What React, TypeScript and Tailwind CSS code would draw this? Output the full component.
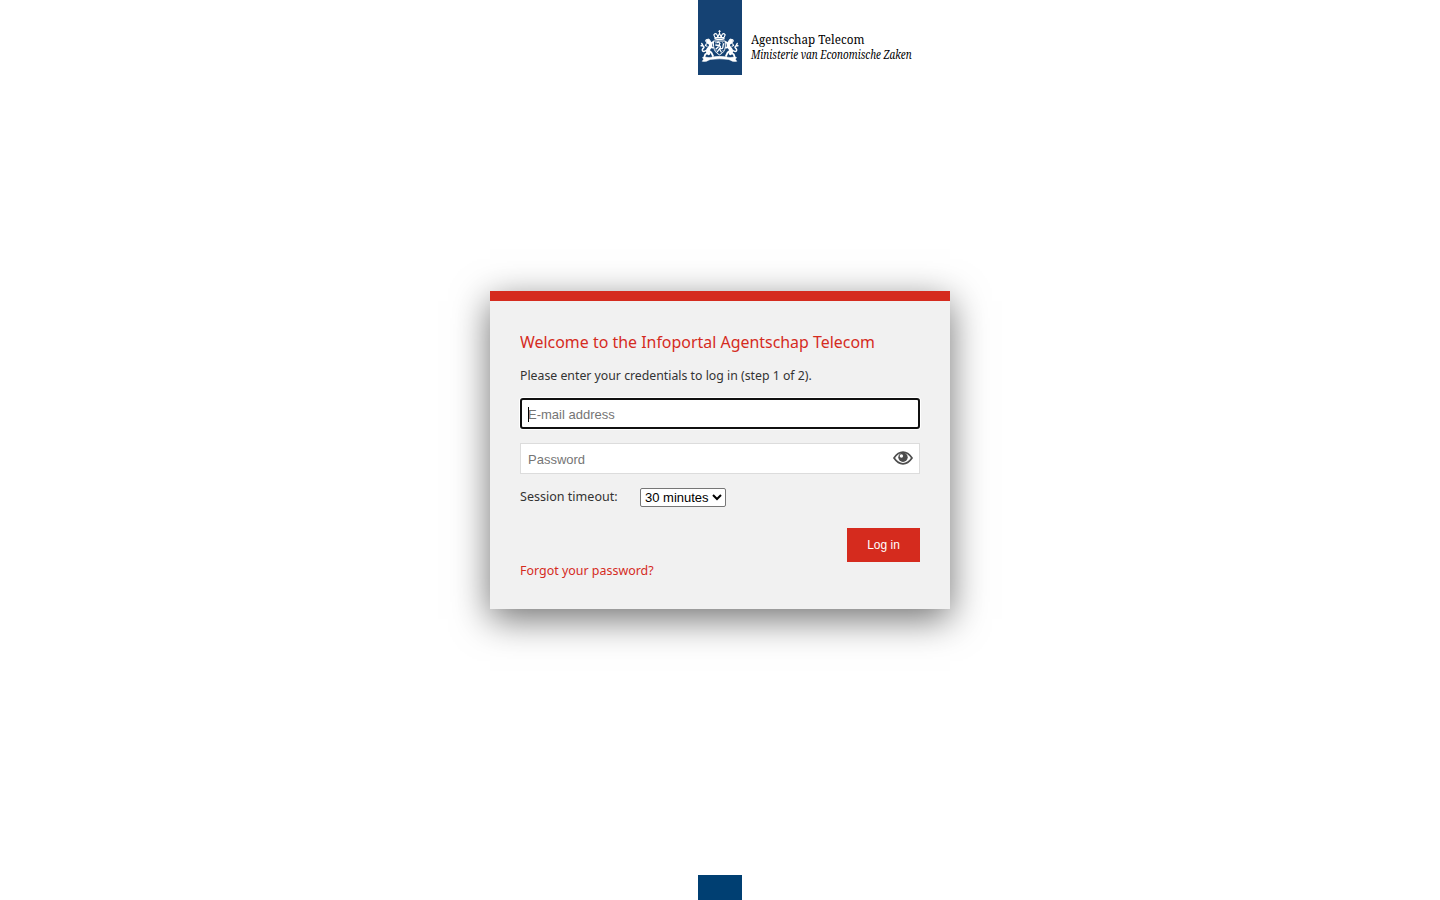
function Lion() {
  return (
    <g fill="none" stroke="#fff" strokeLinecap="round" strokeLinejoin="round">
      <path d="M8.1 39.8 L10.8 39 L12.5 41.3 L11 43.3 L8.4 42.2 Z" fill="#fff" strokeWidth="1" />
      <path d="M10.5 42.5 C13.5 43 13.3 46 11.3 48 C9.3 50 9.2 51.8 10.6 53.5" strokeWidth="3.4" />
      <path d="M12.3 44.3 L15 42.1 M12.5 47.2 L15 47.7 M10.8 50.5 L13.5 52.8 L15 56 M9.7 52.6 L7.2 54.5 L6.4 57" strokeWidth="1.8" />
      <path d="M8.4 50.4 C4.3 53 3.3 49.7 5.4 48.2 C7 46.8 4.8 45.2 3.2 45.8 M5.1 46.2 L3.8 43.5" strokeWidth="1.5" />
      <path d="M8.4 43.8 L7.4 45.5 L9 46.2" strokeWidth="1.2" />
    </g>
  );
}

function Crest() {
  return (
    <svg className="block h-[75px] w-11" viewBox="0 0 44 75" aria-hidden="true">
      <g fill="none" stroke="#fff" strokeLinecap="round" strokeLinejoin="round">
        <path d="M21.5 30.5 V33 M20.6 31.3 H22.4" strokeWidth="0.9" />
        <path d="M17 37.5 L15.8 34.8 Q17.8 32.3 19.2 35 L19.7 37.5 L21.5 33.2 L23.3 37.5 L23.8 35 Q25.3 32.3 27.2 34.8 L26 37.5 Z" strokeWidth="1.1" />
        <path d="M17 38.7 Q21.5 40 26 38.7" strokeWidth="1.5" />
        <path d="M15.7 41 H27.3 V47 Q26.7 52.5 21.5 54.8 Q16.3 52.5 15.7 47 Z" strokeWidth="1" />
        <path d="M19 42.7 L20.5 42 L22 43.4 L21 45 L22.5 47 L21.5 49.2 L23.3 52 M20.5 45.5 L17.8 45 M20.2 47 L18 49 M21.2 49 L19.3 51.8 M22.8 48.7 C26 49 24.3 45.5 25.7 43.8" strokeWidth="1.3" />
        <path d="M17.5 42.8 H17.7 M24.4 42.8 H24.5 M18 50.8 H18.2 M24.8 50.7 H25" strokeWidth="0.8" />
      </g>
      <Lion />
      <g transform="translate(43 0) scale(-1 1)">
        <Lion />
      </g>
      <path
        d="M4.5 57.5 C8 56.1 10 58.5 13 57.2 Q21.5 55.5 30 57.2 C33 58.5 35 56.1 38.5 57.5 L37.4 59.3 L38.8 61.3 Q35 62.3 32 60 L30.5 59.5 Q21.5 58.2 12.5 59.5 L11 60 Q8 62.3 4.2 61.3 L5.6 59.3 Z"
        fill="#fff"
        stroke="#fff"
        strokeWidth="0.5"
      />
    </svg>
  );
}

function EyeIcon() {
  return (
    <svg className="mb-0.5 h-[14px] w-5" viewBox="0 0 20 14" aria-hidden="true">
      <path d="M1 7 Q5 1.2 10 1.2 Q15 1.2 19 7 Q15 12.8 10 12.8 Q5 12.8 1 7 Z" fill="none" stroke="#4d4d4d" strokeWidth="1.7" />
      <circle cx="10" cy="6.2" r="4.7" fill="#4d4d4d" />
      <circle cx="8.4" cy="5" r="1.7" fill="#fff" />
    </svg>
  );
}

export default function App() {
  return (
    <div className="flex h-screen flex-col overflow-hidden bg-white font-['Noto_Sans',sans-serif] text-[#333]">
      <header className="flex h-[75px] shrink-0 pl-[698px]">
        <div className="h-[75px] w-11 shrink-0 bg-[#154273]">
          <Crest />
        </div>
        <div className="ml-[9px] mt-8 whitespace-nowrap font-['Noto_Serif','Liberation_Serif',serif] text-black">
          <div className="h-[15px] w-max origin-left scale-x-[0.897] text-[13px] leading-[15px]">Agentschap Telecom</div>
          <div className="h-[15px] w-max origin-left scale-x-[0.765] text-[13px] italic leading-[15px]">Ministerie van Economische Zaken</div>
        </div>
      </header>

      <main className="flex min-h-0 flex-1 justify-center pt-[216px]">
        <form
          className="h-[318px] w-[460px] border-t-[10px] border-[#d52b1e] bg-[#f1f1f1] px-[30px] shadow-[0_10px_35px_rgba(0,0,0,0.56)]"
          onSubmit={(event) => event.preventDefault()}
        >
          <h1 className="mt-[29px] h-6 w-max origin-left scale-x-[0.937] whitespace-nowrap text-[17px] leading-6 text-[#d52b1e]">
            Welcome to the Infoportal Agentschap Telecom
          </h1>
          <p className="mt-[11px] h-5 w-max origin-left scale-x-[0.945] whitespace-nowrap text-[13px] leading-5">
            Please enter your credentials to log in (step 1 of 2).
          </p>

          <div className="relative mt-[13px] h-[31px] rounded-[3px] border-2 border-[#101010] bg-white shadow-[0_0_0_1px_white]">
            <input
              className="block h-[27px] w-full bg-transparent px-1.5 pt-px font-['Liberation_Sans',sans-serif] text-[13px] caret-transparent outline-none placeholder:text-[#757575]"
              placeholder="E-mail address"
            />
            <span className="absolute left-1.5 top-[7px] h-[15px] w-px bg-black" />
          </div>

          <div className="mt-[14px] flex h-[31px] items-center border border-[#dcdcdc] bg-white pr-1.5">
            <input
              type="password"
              className="h-[29px] min-w-0 flex-1 bg-transparent pl-[7px] pt-px font-['Liberation_Sans',sans-serif] text-[13px] outline-none placeholder:text-[#757575]"
              placeholder="Password"
            />
            <EyeIcon />
          </div>

          <div className="mt-[14px] flex h-[19px] items-center">
            <div className="w-[120px] whitespace-nowrap">
              <label htmlFor="timeout" className="mb-0.5 block w-max origin-left scale-x-[0.965] text-[13px] leading-[19px]">
                Session timeout:
              </label>
            </div>
            <select
              id="timeout"
              className="h-[19px] w-[86px] rounded-[2px] border border-[#767676] bg-white font-['Liberation_Sans',sans-serif] text-[13px] text-black"
            >
              <option>30 minutes</option>
            </select>
          </div>

          <div className="mt-[21px] flex justify-end">
            <button className="h-[34px] w-[73px] bg-[#d52b1e] font-['Liberation_Sans',sans-serif] text-[12px] text-white">
              Log in
            </button>
          </div>
          <a href="#" className="block h-4 w-max origin-left scale-x-[0.957] whitespace-nowrap text-[13px] leading-4 text-[#d52b1e]">
            Forgot your password?
          </a>
        </form>
      </main>

      <footer className="flex h-[25px] shrink-0 justify-center">
        <div className="w-11 bg-[#003f72]" />
      </footer>
    </div>
  );
}
